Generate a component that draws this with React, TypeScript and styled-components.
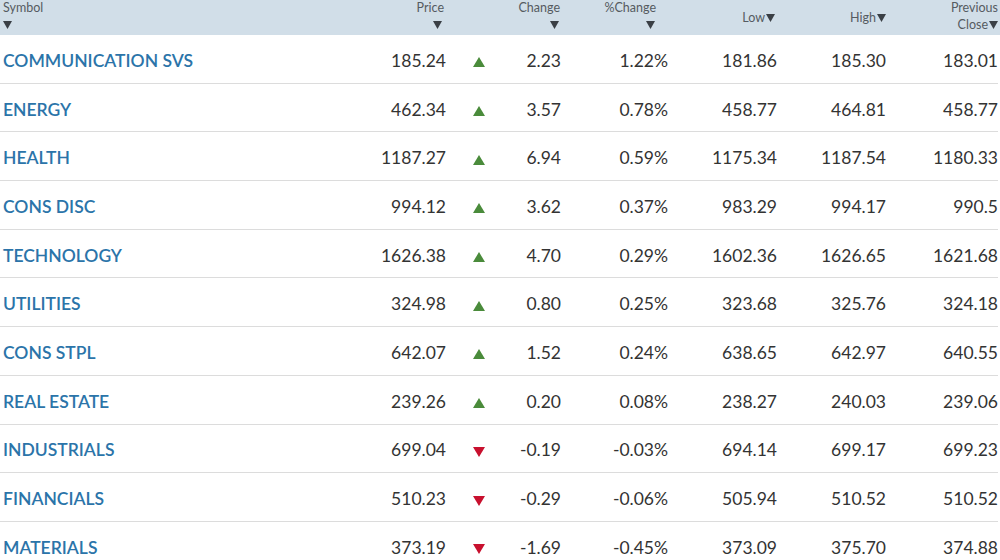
import styled, { createGlobalStyle } from "styled-components";

const GlobalStyle = createGlobalStyle`
  html, body {
    margin: 0;
    padding: 0;
    background: #ffffff;
    font-family: Lato, "Liberation Sans", sans-serif;
  }
`;

type Row = {
  symbol: string;
  price: string;
  change: string;
  pct: string;
  low: string;
  high: string;
  prev: string;
};

const rows: Row[] = [
  { symbol: "COMMUNICATION SVS", price: "185.24", change: "2.23", pct: "1.22%", low: "181.86", high: "185.30", prev: "183.01" },
  { symbol: "ENERGY", price: "462.34", change: "3.57", pct: "0.78%", low: "458.77", high: "464.81", prev: "458.77" },
  { symbol: "HEALTH", price: "1187.27", change: "6.94", pct: "0.59%", low: "1175.34", high: "1187.54", prev: "1180.33" },
  { symbol: "CONS DISC", price: "994.12", change: "3.62", pct: "0.37%", low: "983.29", high: "994.17", prev: "990.5" },
  { symbol: "TECHNOLOGY", price: "1626.38", change: "4.70", pct: "0.29%", low: "1602.36", high: "1626.65", prev: "1621.68" },
  { symbol: "UTILITIES", price: "324.98", change: "0.80", pct: "0.25%", low: "323.68", high: "325.76", prev: "324.18" },
  { symbol: "CONS STPL", price: "642.07", change: "1.52", pct: "0.24%", low: "638.65", high: "642.97", prev: "640.55" },
  { symbol: "REAL ESTATE", price: "239.26", change: "0.20", pct: "0.08%", low: "238.27", high: "240.03", prev: "239.06" },
  { symbol: "INDUSTRIALS", price: "699.04", change: "-0.19", pct: "-0.03%", low: "694.14", high: "699.17", prev: "699.23" },
  { symbol: "FINANCIALS", price: "510.23", change: "-0.29", pct: "-0.06%", low: "505.94", high: "510.52", prev: "510.52" },
  { symbol: "MATERIALS", price: "373.19", change: "-1.69", pct: "-0.45%", low: "373.09", high: "375.70", prev: "374.88" },
];

const COLS = "350px 96px 66px 49px 107px 109px 109px 112px";

const Table = styled.div`
  width: 1000px;
  padding-right: 2px;
  box-sizing: border-box;
`;

const HeaderRow = styled.div`
  display: grid;
  grid-template-columns: ${COLS};
  height: 35px;
  background: #d1dee8;
  width: 1000px;
  margin-right: -2px;
`;

const HeadCell = styled.div<{ $align?: "left" | "right"; $pr?: number }>`
  display: flex;
  flex-direction: column;
  align-items: ${(p) => (p.$align === "left" ? "flex-start" : "flex-end")};
  padding: 0 ${(p) => p.$pr ?? 0}px 0 ${(p) => (p.$align === "left" ? 3 : 0)}px;
  font-size: 12.5px;
  line-height: 15px;
  color: #555b61;
`;

const HeadInline = styled(HeadCell)`
  justify-content: center;
`;

const CaretLine = styled.span<{ $inset?: number }>`
  display: flex;
  align-items: center;
  height: 19px;
  margin-right: ${(p) => p.$inset ?? 0}px;
`;

const Label = styled.span`
  display: inline-flex;
  align-items: center;
  gap: 1px;
`;

const Caret = () => (
  <svg width="9" height="8" viewBox="0 0 9 8">
    <polygon points="0,0 9,0 4.5,8" fill="#3a3f45" />
  </svg>
);

const BodyRow = styled.div`
  display: grid;
  grid-template-columns: ${COLS};
  height: 48.7px;
  box-sizing: border-box;
  border-bottom: 1px solid #dcdcdc;
  align-items: center;
  padding-top: 3px;
  font-size: 17.5px;
`;

const SymbolCell = styled.div`
  padding-left: 3px;
  color: #2b74a9;
  font-weight: 600;
  white-space: nowrap;
`;

const Num = styled.div`
  text-align: right;
  color: #333333;
  white-space: nowrap;
`;

const ArrowCell = styled.div`
  display: flex;
  justify-content: center;
  padding-top: 4px;
`;

const Arrow = ({ up }: { up: boolean }) => (
  <svg width="12" height="10" viewBox="0 0 12 10">
    {up ? (
      <polygon points="6,0 12,10 0,10" fill="#4a8b3b" />
    ) : (
      <polygon points="0,0 12,0 6,10" fill="#c8102e" />
    )}
  </svg>
);

export default function App() {
  return (
    <>
      <GlobalStyle />
      <Table>
        <HeaderRow>
          <HeadCell $align="left">
            <span>Symbol</span>
            <CaretLine>
              <Caret />
            </CaretLine>
          </HeadCell>
          <HeadCell $pr={2}>
            <span>Price</span>
            <CaretLine $inset={2}>
              <Caret />
            </CaretLine>
          </HeadCell>
          <div />
          <HeadCell $pr={1}>
            <span>Change</span>
            <CaretLine $inset={1}>
              <Caret />
            </CaretLine>
          </HeadCell>
          <HeadCell $pr={12}>
            <span>%Change</span>
            <CaretLine $inset={1}>
              <Caret />
            </CaretLine>
          </HeadCell>
          <HeadInline $pr={2}>
            <Label>
              Low
              <Caret />
            </Label>
          </HeadInline>
          <HeadInline $pr={0}>
            <Label>
              High
              <Caret />
            </Label>
          </HeadInline>
          <HeadCell $pr={0}>
            <span>Previous</span>
            <CaretLine>
              <Label>
                Close
                <Caret />
              </Label>
            </CaretLine>
          </HeadCell>
        </HeaderRow>
        {rows.map((r) => (
          <BodyRow key={r.symbol}>
            <SymbolCell>{r.symbol}</SymbolCell>
            <Num>{r.price}</Num>
            <ArrowCell>
              <Arrow up={!r.change.startsWith("-")} />
            </ArrowCell>
            <Num>{r.change}</Num>
            <Num>{r.pct}</Num>
            <Num>{r.low}</Num>
            <Num>{r.high}</Num>
            <Num>{r.prev}</Num>
          </BodyRow>
        ))}
      </Table>
    </>
  );
}
